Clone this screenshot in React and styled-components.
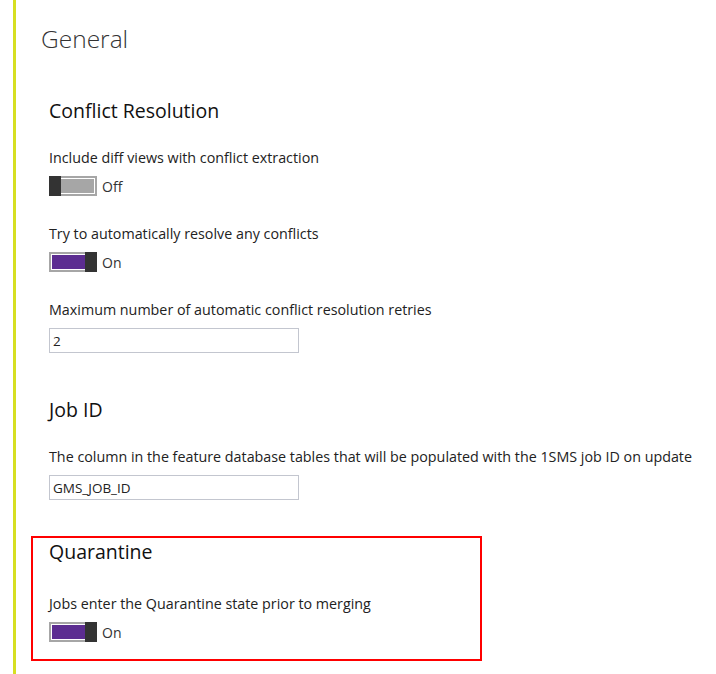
import styled, { createGlobalStyle } from "styled-components";

const GlobalStyle = createGlobalStyle`
  html, body {
    margin: 0;
    padding: 0;
    background: #fff;
  }
  body {
    font-family: "Open Sans", "Noto Sans", "Liberation Sans", sans-serif;
    color: #222;
  }
`;

const settings = [
  {
    title: "Conflict Resolution",
    items: [
      { kind: "toggle", label: "Include diff views with conflict extraction", on: false },
      { kind: "toggle", label: "Try to automatically resolve any conflicts", on: true },
      { kind: "text", label: "Maximum number of automatic conflict resolution retries", value: "2" },
    ],
  },
  {
    title: "Job ID",
    items: [
      {
        kind: "text",
        label: "The column in the feature database tables that will be populated with the 1SMS job ID on update",
        value: "GMS_JOB_ID",
      },
    ],
  },
];

const Toggle = ({ on }) => (
  <ToggleRow>
    <Switch>
      <Track $on={on}>
        <Fill $on={on} />
      </Track>
      <Thumb $on={on} />
    </Switch>
    <ToggleText>{on ? "On" : "Off"}</ToggleText>
  </ToggleRow>
);

const Field = ({ item }) => (
  <FieldWrap>
    <Label>{item.label}</Label>
    {item.kind === "toggle" ? (
      <Toggle on={item.on} />
    ) : (
      <TextInput defaultValue={item.value} />
    )}
  </FieldWrap>
);

const App = () => {
  return (
    <Page>
      <GlobalStyle />
      <Content>
        <PageTitle>General</PageTitle>
        {settings.map((s) => (
          <Section key={s.title}>
            <SectionTitle>{s.title}</SectionTitle>
            <Fields>
              {s.items.map((item) => (
                <Field key={item.label} item={item} />
              ))}
            </Fields>
          </Section>
        ))}
        <Highlight>
          <SectionTitle>Quarantine</SectionTitle>
          <Fields $top={30}>
            <Field
              item={{
                kind: "toggle",
                label: "Jobs enter the Quarantine state prior to merging",
                on: true,
              }}
            />
          </Fields>
        </Highlight>
      </Content>
    </Page>
  );
};

export default App;

const Page = styled.div`
  height: 674px;
  padding-left: 13px;
  overflow: hidden;
`;

const Content = styled.div`
  height: 100%;
  border-left: 3px solid #d6df22;
  display: flex;
  flex-direction: column;
`;

const PageTitle = styled.h1`
  margin: 24px 0 0 25px;
  font-size: 24.5px;
  font-weight: 300;
  line-height: 30px;
  color: #333;
`;

const Section = styled.section`
  margin: 44px 0 0 33px;
  display: flex;
  flex-direction: column;
`;

const SectionTitle = styled.h2`
  margin: 0;
  font-size: 19.5px;
  font-weight: 400;
  line-height: 26px;
  color: #111;
`;

const Fields = styled.div`
  display: flex;
  flex-direction: column;
  gap: 29px;
  margin-top: ${(p) => p.$top ?? 25}px;
`;

const FieldWrap = styled.div`
  display: flex;
  flex-direction: column;
  gap: 9px;
`;

const Label = styled.div`
  font-size: 14.3px;
  line-height: 18px;
  color: #222;
`;

const ToggleRow = styled.div`
  display: flex;
  align-items: center;
  gap: 5px;
  height: 20px;
`;

const Switch = styled.div`
  display: flex;
  width: 48px;
  height: 20px;
`;

const Track = styled.div`
  flex: 1;
  display: flex;
  order: ${(p) => (p.$on ? 0 : 1)};
  border: 2px solid #a6a6a6;
  ${(p) => (p.$on ? "border-right: 0;" : "border-left: 0;")}
`;

const Fill = styled.div`
  flex: 1;
  border: 1px solid #fff;
  ${(p) => (p.$on ? "border-right: 0;" : "border-left: 0;")}
  background: ${(p) => (p.$on ? "#5c2d91" : "#a6a6a6")};
`;

const Thumb = styled.div`
  width: 12px;
  height: 20px;
  background: #333;
  order: ${(p) => (p.$on ? 1 : 0)};
`;

const ToggleText = styled.span`
  font-size: 14px;
  color: #333;
`;

const TextInput = styled.input`
  box-sizing: border-box;
  width: 250px;
  height: 25px;
  margin: 0;
  padding: 0 3px;
  border: 1px solid #c3c6cf;
  border-radius: 0;
  font-family: "Open Sans", "Noto Sans", sans-serif;
  font-size: 13.5px;
  color: #222;
  outline: none;
`;

const Highlight = styled.section`
  margin: 36px 0 0 15px;
  width: 451px;
  box-sizing: border-box;
  border: 2px solid #f00;
  padding: 1px 0 17px 16px;
  display: flex;
  flex-direction: column;
`;
